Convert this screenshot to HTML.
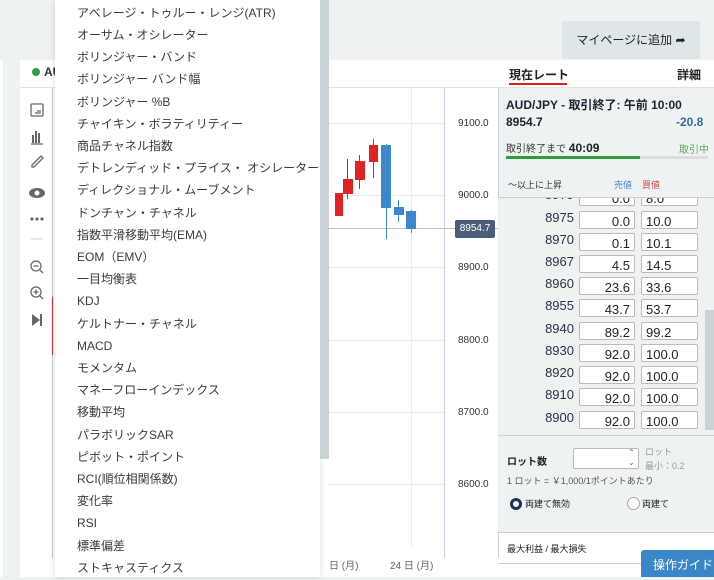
<!DOCTYPE html>
<html><head><meta charset="utf-8"><style>
*{box-sizing:border-box;margin:0;padding:0}
body{width:714px;height:577px;overflow:hidden;background:#eef2f3;font-family:"Liberation Sans","Noto Sans CJK JP",sans-serif;color:#333;position:relative;font-size:12px}
.abs{position:absolute}
.menu{left:55px;top:0;width:265px;height:577px;background:#fff;box-shadow:0 0 6px rgba(0,0,0,.15)}
.menu div{position:absolute;left:22px;font-size:12px;color:#3a3a40;white-space:nowrap;line-height:14px}
.sb{left:320px;top:0;width:9px;height:459px;background:#c9d2d5}
.grid{background:#e8ecee}
.row{position:absolute;left:498px;width:207px;height:22px}
.row .p{position:absolute;left:30px;width:46px;text-align:right;font-size:13px;color:#2a3346;top:2px}
.row .s,.row .b{position:absolute;top:3px;height:18px;border:1px solid #bbb;border-radius:2px;background:#fff;font-size:13px;color:#222;line-height:20px;padding:0 4px}
.row .s{left:81px;width:56px;text-align:right}
.row .b{left:143px;width:57px}
.ax{position:absolute;left:458px;font-size:10px;color:#333}
</style></head><body>
<div class="abs" style="left:0;top:60px;width:3px;height:517px;background:#fff"></div>
<div class="abs" style="left:562px;top:21px;width:138px;height:38px;background:#dfe6e9;border-radius:2px;font-size:12px;color:#222;line-height:38px;text-align:center">マイページに追加 <span style="font-size:12px">➦</span></div>
<div class="abs" style="left:20px;top:60px;width:694px;height:517px;background:#fff"></div>
<div class="abs" style="left:20px;top:87px;width:694px;height:1px;background:#dde3e6"></div>
<div class="abs" style="left:32px;top:68px;width:8px;height:8px;border-radius:50%;background:#2ea043"></div>
<div class="abs" style="left:44px;top:65px;font-size:12px;font-weight:bold">AU</div>
<div class="abs" style="left:52px;top:88px;width:1px;height:470px;background:#ccc"></div>
<div class="abs" style="left:52px;top:297px;width:1px;height:58px;background:#c33"></div>
<!-- toolbar icons -->
<svg class="abs" style="left:26px;top:100px" width="22" height="230" viewBox="0 0 22 230">
<g fill="none" stroke="#666" stroke-width="1.3">
<rect x="5" y="4" width="12" height="12" rx="1"/>
<path d="M9 13h6M11 11h4"/>
<path d="M5 44h12"/>
<path d="M9 62l-3 3 0 2 2 0 9-9-2-2z"/>
<line x1="5" y1="139" x2="17" y2="139" stroke="#ddd"/>
<circle cx="10" cy="166" r="5"/><path d="M14 170l3 3M7.5 166h5"/>
<circle cx="10" cy="192" r="5"/><path d="M14 196l3 3M7.5 192h5M10 189.5v5"/>
</g>
<g fill="#666">
<rect x="6" y="35" width="2" height="8"/><rect x="9" y="31" width="2" height="12"/><rect x="12" y="33" width="2" height="10"/>
<ellipse cx="11" cy="93" rx="8" ry="5"/>
<circle cx="6" cy="119" r="1.6"/><circle cx="11" cy="119" r="1.6"/><circle cx="16" cy="119" r="1.6"/>
<path d="M6 214l8 6-8 6z"/><rect x="14" y="214" width="2" height="12"/>
</g>
<circle cx="11" cy="93" r="2.5" fill="#fff"/>
</svg>
<!-- grid -->
<div class="abs grid" style="left:329px;top:123px;width:116px;height:1px"></div>
<div class="abs grid" style="left:329px;top:195px;width:116px;height:1px"></div>
<div class="abs grid" style="left:329px;top:267px;width:116px;height:1px"></div>
<div class="abs grid" style="left:329px;top:340px;width:116px;height:1px"></div>
<div class="abs grid" style="left:329px;top:412px;width:116px;height:1px"></div>
<div class="abs grid" style="left:329px;top:484px;width:116px;height:1px"></div>
<div class="abs grid" style="left:411px;top:88px;width:1px;height:460px"></div>
<div class="abs" style="left:329px;top:228px;width:170px;height:1px;background:#b8c2c8"></div>
<div class="abs" style="left:444px;top:88px;width:1px;height:470px;background:#ccd"></div>
<div class="abs" style="left:498px;top:88px;width:1px;height:470px;background:#ccd"></div>
<div class="abs" style="left:335px;top:193px;width:8px;height:23px;background:#e02424"></div>
<div class="abs" style="left:343px;top:179px;width:10px;height:15px;background:#e02424"></div>
<div class="abs" style="left:347px;top:159px;width:1px;height:40px;background:#e02424"></div>
<div class="abs" style="left:355px;top:161px;width:10px;height:19px;background:#e02424"></div>
<div class="abs" style="left:359px;top:155px;width:1px;height:34px;background:#e02424"></div>
<div class="abs" style="left:369px;top:145px;width:9px;height:17px;background:#e02424"></div>
<div class="abs" style="left:373px;top:139px;width:1px;height:39px;background:#e02424"></div>
<div class="abs" style="left:381px;top:145px;width:10px;height:63px;background:#3d88cc"></div>
<div class="abs" style="left:386px;top:144px;width:1px;height:95px;background:#3d88cc"></div>
<div class="abs" style="left:394px;top:207px;width:10px;height:8px;background:#3d88cc"></div>
<div class="abs" style="left:398px;top:200px;width:1px;height:22px;background:#3d88cc"></div>
<div class="abs" style="left:406px;top:211px;width:10px;height:18px;background:#3d88cc"></div>
<div class="abs" style="left:411px;top:210px;width:1px;height:23px;background:#3d88cc"></div>
<div class="ax" style="top:118px">9100.0</div>
<div class="ax" style="top:190px">9000.0</div>
<div class="ax" style="top:262px">8900.0</div>
<div class="ax" style="top:335px">8800.0</div>
<div class="ax" style="top:407px">8700.0</div>
<div class="ax" style="top:479px">8600.0</div>
<div class="abs" style="left:455px;top:220px;width:40px;height:18px;background:#4b5d7a;border-radius:2px;color:#fff;font-size:10px;line-height:18px;text-align:center">8954.7</div>
<div class="abs" style="left:329px;top:557px;font-size:10px;color:#666">日 (月)</div>
<div class="abs" style="left:390px;top:557px;font-size:10px;color:#666">24 日 (月)</div>
<!-- right panel -->
<div class="abs" style="left:509px;top:66px;font-size:12px;font-weight:bold;color:#222">現在レート</div>
<div class="abs" style="left:509px;top:83px;width:58px;height:2px;background:#d62020"></div>
<div class="abs" style="left:677px;top:66px;font-size:12px;font-weight:bold;color:#222">詳細</div>
<div class="abs" style="left:499px;top:88px;width:215px;height:110px;background:#eef2f3;border-bottom:1px solid #c8d0d4"></div>
<div class="abs" style="left:506px;top:96px;font-size:12px;font-weight:bold;color:#223">AUD/JPY - 取引終了: 午前 10:00</div>
<div class="abs" style="left:506px;top:115px;font-size:12px;font-weight:bold;color:#223">8954.7</div>
<div class="abs" style="left:676px;top:115px;font-size:12px;font-weight:bold;color:#2e6da4">-20.8</div>
<div class="abs" style="left:506px;top:140px;font-size:10px;color:#333">取引終了まで <b style="font-size:12px;color:#222">40:09</b></div>
<div class="abs" style="left:679px;top:141px;font-size:10px;color:#5aaa5a">取引中</div>
<div class="abs" style="left:506px;top:156px;width:202px;height:3px;background:#ddd"></div>
<div class="abs" style="left:506px;top:156px;width:134px;height:3px;background:#2e9e3a"></div>
<div class="abs" style="left:508px;top:178px;font-size:9px;color:#333">～以上に上昇</div>
<div class="abs" style="left:614px;top:178px;font-size:9px;color:#4a86c4">売値</div>
<div class="abs" style="left:642px;top:178px;font-size:9px;color:#d04848">買値</div>
<div class="abs" style="left:498px;top:198px;width:216px;height:237px;background:#eef2f3"></div>
<div style="position:absolute;left:0;top:198px;width:714px;height:237px;overflow:hidden">
<div class="row" style="top:-13px"><span class="p">8979</span><span class="s">0.0</span><span class="b">8.0</span></div>
<div class="row" style="top:10px"><span class="p">8975</span><span class="s">0.0</span><span class="b">10.0</span></div>
<div class="row" style="top:32px"><span class="p">8970</span><span class="s">0.1</span><span class="b">10.1</span></div>
<div class="row" style="top:54px"><span class="p">8967</span><span class="s">4.5</span><span class="b">14.5</span></div>
<div class="row" style="top:76px"><span class="p">8960</span><span class="s">23.6</span><span class="b">33.6</span></div>
<div class="row" style="top:98px"><span class="p">8955</span><span class="s">43.7</span><span class="b">53.7</span></div>
<div class="row" style="top:121px"><span class="p">8940</span><span class="s">89.2</span><span class="b">99.2</span></div>
<div class="row" style="top:143px"><span class="p">8930</span><span class="s">92.0</span><span class="b">100.0</span></div>
<div class="row" style="top:165px"><span class="p">8920</span><span class="s">92.0</span><span class="b">100.0</span></div>
<div class="row" style="top:187px"><span class="p">8910</span><span class="s">92.0</span><span class="b">100.0</span></div>
<div class="row" style="top:210px"><span class="p">8900</span><span class="s">92.0</span><span class="b">100.0</span></div>
</div>
<div class="abs" style="left:705px;top:310px;width:9px;height:120px;background:#c9d2d5"></div>
<div class="abs" style="left:498px;top:435px;width:216px;height:98px;background:#eef2f3;border-top:1px solid #c8d0d4;border-bottom:1px solid #c8d0d4"></div>
<div class="abs" style="left:507px;top:453px;font-size:10px;font-weight:bold;color:#222">ロット数</div>
<div class="abs" style="left:573px;top:448px;width:66px;height:21px;background:#fff;border:1px solid #bbb;border-radius:2px"></div>
<div class="abs" style="left:628px;top:448px;font-size:8px;color:#666;line-height:10px">⌃<br>⌄</div>
<div class="abs" style="left:645px;top:445px;font-size:9px;color:#999;line-height:14px">ロット<br>最小：0.2</div>
<div class="abs" style="left:507px;top:474px;font-size:9px;color:#555">1 ロット = ￥1,000/1ポイントあたり</div>
<div class="abs" style="left:510px;top:498px;width:12px;height:12px;border:3px solid #1e3350;border-radius:50%;background:#fff"></div>
<div class="abs" style="left:525px;top:497px;font-size:9px;color:#222">両建て無効</div>
<div class="abs" style="left:627px;top:497px;width:13px;height:13px;border:1px solid #aaa;border-radius:50%;background:#fff"></div>
<div class="abs" style="left:642px;top:497px;font-size:9px;color:#222">両建て</div>
<div class="abs" style="left:507px;top:542px;font-size:9px;color:#222">最大利益 / 最大損失</div>
<div class="abs" style="left:498px;top:563px;width:216px;height:1px;background:#c8d0d4"></div>
<div class="abs" style="left:641px;top:550px;width:73px;height:27px;background:#3a86c8;border-radius:3px 0 0 0;color:#fff;font-size:12px;line-height:30px;padding-left:12px">操作ガイド</div>
<div class="abs menu">
<div style="top:6px">アベレージ・トゥルー・レンジ(ATR)</div>
<div style="top:28px">オーサム・オシレーター</div>
<div style="top:50px">ボリンジャー・バンド</div>
<div style="top:72px">ボリンジャー バンド幅</div>
<div style="top:95px">ボリンジャー %B</div>
<div style="top:117px">チャイキン・ボラティリティー</div>
<div style="top:139px">商品チャネル指数</div>
<div style="top:161px">デトレンディッド・プライス・ オシレーター</div>
<div style="top:183px">ディレクショナル・ムーブメント</div>
<div style="top:206px">ドンチャン・チャネル</div>
<div style="top:228px">指数平滑移動平均(EMA)</div>
<div style="top:250px">EOM（EMV）</div>
<div style="top:272px">一目均衡表</div>
<div style="top:294px">KDJ</div>
<div style="top:317px">ケルトナー・チャネル</div>
<div style="top:339px">MACD</div>
<div style="top:361px">モメンタム</div>
<div style="top:383px">マネーフローインデックス</div>
<div style="top:405px">移動平均</div>
<div style="top:428px">パラボリックSAR</div>
<div style="top:450px">ピボット・ポイント</div>
<div style="top:472px">RCI(順位相関係数)</div>
<div style="top:494px">変化率</div>
<div style="top:516px">RSI</div>
<div style="top:539px">標準偏差</div>
<div style="top:561px">ストキャスティクス</div>
</div>
<div class="abs sb"></div>
</body></html>
